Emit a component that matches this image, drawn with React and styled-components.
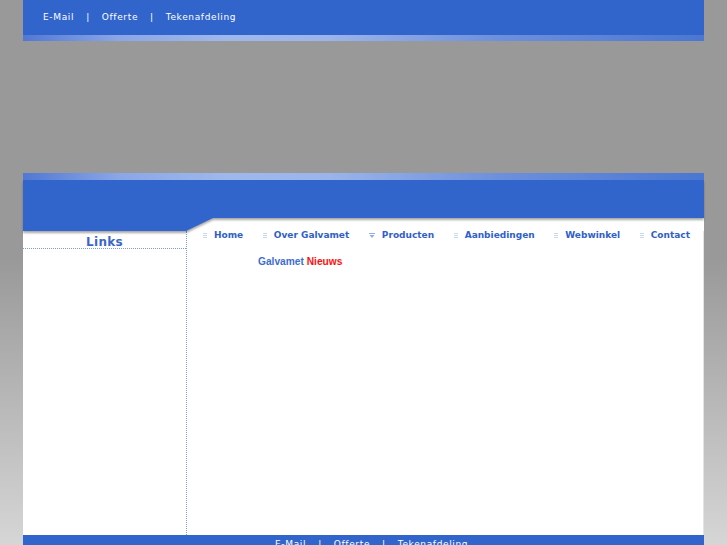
import React from 'react'
import styled, { createGlobalStyle } from 'styled-components'

const GlobalStyle = createGlobalStyle`
    html, body {
        margin: 0;
        padding: 0;
    }
    body {
        min-height: 100vh;
        background: linear-gradient(#999999 0, #999999 258px, #d6d6d6 545px);
        font-family: "DejaVu Sans", Verdana, sans-serif;
        overflow: hidden;
    }
`

const Page = styled.div`
    width: 681px;
    margin: 0 auto;
`

const TopBar = styled.div`
    height: 35px;
    background-color: #3165cc;
    display: flex;
    align-items: center;
    padding: 0 0 1px 20px;
    box-sizing: border-box;
`

const Shine = styled.div`
    height: ${({h}) => h}px;
    background: linear-gradient(90deg, #5178d3 0%, #8aa6e6 14%, #9fb8ec 30%, #9bb4ea 45%, #6d90dc 70%, #4a77d2 100%);
`

const TopLinks = styled.div`
    display: flex;
    align-items: center;
    color: #ffffff;
    font-size: 9px;
    letter-spacing: 0.65px;
    white-space: nowrap;
`

const Sep = styled.span`
    margin: 0 ${({m}) => m}px;
`

const Gap = styled.div`
    height: 132px;
`

const HeaderBack = styled.div`
    background: #ffffff;
`

const HeaderShadow = styled.div`
    filter: drop-shadow(0 2px 1px rgba(60, 60, 60, 0.45));
`

const HeaderBlue = styled.div`
    height: 51px;
    background: #3165cc;
    clip-path: polygon(0 0, 100% 0, 100% 38px, 190px 38px, 163px 100%, 0 100%);
`

const Body = styled.div`
    display: flex;
    height: 304px;
    background: #ffffff;
    box-shadow: inset -1px 0 0 #e4e4e4;
`

const LeftCol = styled.div`
    width: 163px;
    border-right: 1px dotted #7f9de0;
`

const LeftTitle = styled.div`
    height: 17px;
    border-bottom: 1px dotted #7f9de0;
    text-align: center;
    color: #3b67c8;
    font-size: 12px;
    font-weight: bold;
    line-height: 22px;
    letter-spacing: 0.3px;
`

const Main = styled.div`
    flex: 1;
    display: flex;
    flex-direction: column;
`

const Nav = styled.div`
    display: flex;
    align-items: center;
    gap: 19.6px;
    padding: 0 0 0 16px;
    height: 10px;
    margin-top: -1px;
`

const NavItem = styled.div`
    display: flex;
    align-items: center;
    gap: 7px;
    color: #3060c8;
    font-size: 9px;
    font-weight: bold;
    white-space: nowrap;
`

const News = styled.div`
    margin: 16px 0 0 71px;
    font-family: "Liberation Sans", Arial, sans-serif;
    font-size: 10.2px;
    font-weight: bold;
    color: #3e6dd0;
`

const Red = styled.span`
    color: #ff1010;
`

const Footer = styled.div`
    height: 14px;
    background: #3165cc;
    display: flex;
    padding: 3px 0 0 252px;
    box-sizing: border-box;
`

const Dots = () => (
    <svg width="4" height="5" viewBox="0 0 4 5">
        {[0, 2, 4].map(y => [0, 2].map(x => (
            <rect key={`${x}-${y}`} x={x + 0.5} y={y} width="1" height="1" fill="#93aee6" />
        )))}
    </svg>
)

const Arrow = () => (
    <svg width="6" height="5" viewBox="0 0 6 5">
        <rect x="0" y="0" width="6" height="1" fill="#93aee6" />
        <path d="M0.5 2 L5.5 2 L3 5 Z" fill="#93aee6" />
    </svg>
)

const navItems = [
    { label: 'Home' },
    { label: 'Over Galvamet' },
    { label: 'Producten', arrow: true },
    { label: 'Aanbiedingen' },
    { label: 'Webwinkel' },
    { label: 'Contact' },
]

const Links = ({ m }) => (
    <>
        <span>E-Mail</span><Sep m={m}>|</Sep>
        <span>Offerte</span><Sep m={m}>|</Sep>
        <span>Tekenafdeling</span>
    </>
)

const App = () => {
    return (
        <>
            <GlobalStyle />
            <Page>
                <TopBar>
                    <TopLinks><Links m={12} /></TopLinks>
                </TopBar>
                <Shine h={6} />
                <Gap />
                <Shine h={7} />
                <HeaderBack>
                    <HeaderShadow>
                        <HeaderBlue />
                    </HeaderShadow>
                </HeaderBack>
                <Body>
                    <LeftCol>
                        <LeftTitle>Links</LeftTitle>
                    </LeftCol>
                    <Main>
                        <Nav>
                            {navItems.map(item => (
                                <NavItem key={item.label}>
                                    {item.arrow ? <Arrow /> : <Dots />}
                                    {item.label}
                                </NavItem>
                            ))}
                        </Nav>
                        <News>Galvamet <Red>Nieuws</Red></News>
                    </Main>
                </Body>
                <Footer>
                    <TopLinks><Links m={12} /></TopLinks>
                </Footer>
            </Page>
        </>
    )
}

export default App
